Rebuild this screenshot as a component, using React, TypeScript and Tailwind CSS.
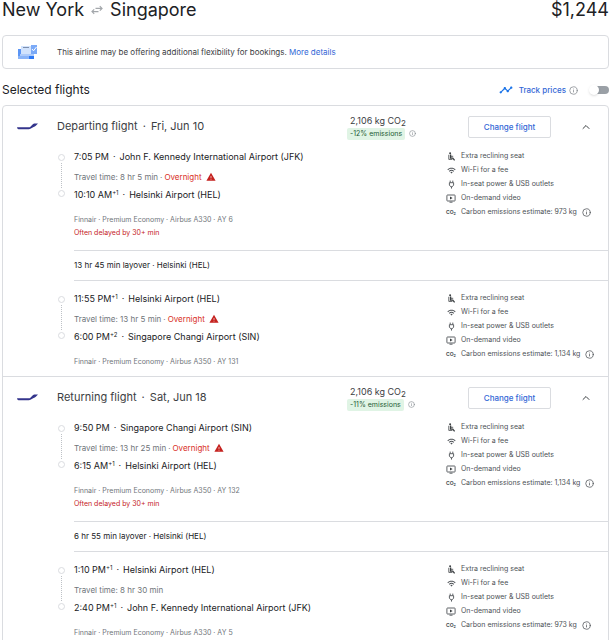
import { ChevronUp, Info } from "lucide-react";
import { MdTimeline, MdWifi, MdWarning } from "react-icons/md";

type Leg = {
  depart: string;
  departDay?: string;
  from: string;
  travel: string;
  overnight?: boolean;
  arrive: string;
  arriveDay?: string;
  to: string;
  plane: string;
  delayed?: boolean;
  carbon: string;
};

type Trip = { title: string; date: string; change: string; layover: string; legs: Leg[] };

const JFK = "John F. Kennedy International Airport (JFK)";
const HEL = "Helsinki Airport (HEL)";
const SIN = "Singapore Changi Airport (SIN)";

const trips: Trip[] = [
  {
    title: "Departing flight", date: "Fri, Jun 10", change: "-12% emissions", layover: "13 hr 45 min layover · Helsinki (HEL)",
    legs: [
      { depart: "7:05 PM", from: JFK, travel: "8 hr 5 min", overnight: true, arrive: "10:10 AM", arriveDay: "+1", to: HEL, plane: "Airbus A330 · AY 6", delayed: true, carbon: "973 kg" },
      { depart: "11:55 PM", departDay: "+1", from: HEL, travel: "13 hr 5 min", overnight: true, arrive: "6:00 PM", arriveDay: "+2", to: SIN, plane: "Airbus A350 · AY 131", carbon: "1,134 kg" },
    ],
  },
  {
    title: "Returning flight", date: "Sat, Jun 18", change: "-11% emissions", layover: "6 hr 55 min layover · Helsinki (HEL)",
    legs: [
      { depart: "9:50 PM", from: SIN, travel: "13 hr 25 min", overnight: true, arrive: "6:15 AM", arriveDay: "+1", to: HEL, plane: "Airbus A350 · AY 132", delayed: true, carbon: "1,134 kg" },
      { depart: "1:10 PM", departDay: "+1", from: HEL, travel: "8 hr 30 min", arrive: "2:40 PM", arriveDay: "+1", to: JFK, plane: "Airbus A330 · AY 5", carbon: "973 kg" },
    ],
  },
];

function SwapIcon() {
  return (
    <svg viewBox="0 0 12 10" className="h-[10px] w-3" fill="none" stroke="#a3a7ab" strokeWidth="1.2">
      <path d="M4.500 3.400H11M8.800 1.200 11 3.400 8.800 5.600M7.500 6.600H1M3.200 4.400 1 6.600l2.200 2.200" />
    </svg>
  );
}

function TicketIcon() {
  return (
    <svg viewBox="0 0 21 16" className="h-4 w-[21px]">
      <path d="M1 5h16v10H1z" fill="#8ab4f8" />
      <path d="M1 5h3v7H1z" fill="#5b95f5" />
      <path d="M4 2h11v9H4z" fill="#d2e3fc" />
      <path d="M6 3h6v1H6z" fill="#7d8fae" />
      <path d="M3 10h14v2H3z" fill="#aecbfa" />
      <path d="M12 12h5v3h-5z" fill="#2f7af5" />
      <path d="M14 1h6v9h-6z" fill="#7baaf7" />
      <path d="M15 5l1.500 1.800L19.500 3" fill="none" stroke="#fff" />
    </svg>
  );
}

function FinnairIcon() {
  return (
    <svg viewBox="0 0 21 8" className="h-2 w-[21px]" fill="#34358c">
      <path d="M0 4.300h11.500c1 0 1.500-.3 2.100-.9l2-2C16.300.7 17 .5 18 .5h3l-2.200 2.300c-.7.7-1.300 1-2.200 1.200l-2.700 1.500c-.7.4-1.300.7-2.300.7H1.500C.8 6.200.2 5.500 0 4.300z" />
    </svg>
  );
}

function SeatIcon() {
  return (
    <svg viewBox="0 0 9 9" className="size-[9px]" fill="none" stroke="#3c4043">
      <circle cx="3.100" cy="1.300" r="1" fill="#3c4043" stroke="none" />
      <path d="M3.600 2.600v3.600h2.200L7.600 8.400" strokeWidth="1.300" />
      <path d="M1.800 2.800v4.600h3.600M4 4.300h2.200" strokeWidth=".8" />
    </svg>
  );
}

function PlugIcon() {
  return (
    <svg viewBox="0 0 9 9" className="size-[9px]" fill="none" stroke="#4d5156" strokeWidth=".9">
      <path d="M3.200 .6v2M5.800 .6v2M2.400 2.700h4.200v2.400L5.200 6.800H3.800L2.400 5.100zM4.500 6.800v1.800" />
    </svg>
  );
}

function VideoIcon() {
  return (
    <svg viewBox="0 0 10 9" className="h-[9px] w-[10px]" fill="none" stroke="#4d5156" strokeWidth=".9">
      <rect x=".9" y="1" width="8.200" height="6" rx=".6" />
      <path d="M3.500 8.200h3" />
      <path d="M4 2.500 6.600 4 4 5.500z" fill="#3c4043" stroke="none" />
    </svg>
  );
}

function Amenities({ carbon }: { carbon: string }) {
  const rows = [
    { icon: <SeatIcon />, text: "Extra reclining seat" },
    { icon: <MdWifi className="size-[9px]" />, text: "Wi-Fi for a fee" },
    { icon: <PlugIcon />, text: "In-seat power & USB outlets" },
    { icon: <VideoIcon />, text: "On-demand video" },
    { icon: <span className="text-[5px] font-bold">CO<sub>2</sub></span>, text: `Carbon emissions estimate: ${carbon}`, info: true },
  ];
  return (
    <ul className="w-[162px] shrink-0 text-[7px] leading-[14px] text-[#4d5156]">
      {rows.map(r => (
        <li key={r.text} className="flex h-[14px] items-center whitespace-nowrap">
          <span className="mr-[5px] flex w-[10px] justify-center">{r.icon}</span>
          {r.text}
          {r.info && <Info className="ml-[5px] size-[9px]" />}
        </li>
      ))}
    </ul>
  );
}

function Stop({ time, day, airport }: { time: string; day?: string; airport: string }) {
  return (
    <p className="flex h-4 items-center text-[9px] text-[#202124]">
      <span>{time}</span>
      {day && <span className="mb-[5px] text-[6px]">{day}</span>}
      <span className="mx-1">·</span>
      <span>{airport}</span>
    </p>
  );
}

function LegDetails({ leg }: { leg: Leg }) {
  return (
    <div className="flex pt-[10px] pb-[11px] pl-[55px] last:pb-2">
      <div className="mt-[5px] flex h-[43px] w-[7px] shrink-0 flex-col items-center">
        <span className="size-[7px] rounded-full border border-[#dadce0]" />
        <span className="my-[2px] flex-1 border-l border-dotted border-[#bdc1c6]" />
        <span className="size-[7px] rounded-full border border-[#dadce0]" />
      </div>
      <div className="ml-[9px] flex-1 whitespace-nowrap">
        <Stop time={leg.depart} day={leg.departDay} airport={leg.from} />
        <p className="mt-1 mb-[2px] flex h-4 items-center gap-[2px] text-[8px] text-[#70757a]">
          Travel time: {leg.travel}
          {leg.overnight && (
            <>
              <span>·</span>
              <span className="text-[#d93025]">Overnight</span>
              <MdWarning className="ml-[2px] size-[10px] text-[#c5221f]" />
            </>
          )}
        </p>
        <Stop time={leg.arrive} day={leg.arriveDay} airport={leg.to} />
        <p className="mt-[10px] text-[7px] leading-[13px] text-[#70757a]">Finnair · Premium Economy · {leg.plane}</p>
        {leg.delayed && <p className="text-[7px] leading-[13px] text-[#c5221f]">Often delayed by 30+ min</p>}
      </div>
      <Amenities carbon={leg.carbon} />
    </div>
  );
}

function TripSection({ trip }: { trip: Trip }) {
  return (
    <section className="border-b border-[#dadce0] last:border-b-0">
      <header className="flex h-[33px] items-center pt-2 pl-[14px] whitespace-nowrap">
        <FinnairIcon />
        <h3 className="ml-[19px] flex-1 text-[11px] text-[#3c4043]">
          {trip.title} <span className="mx-[2px]">·</span> {trip.date}
        </h3>
        <div className="w-[121px]">
          <p className="pl-[3px] text-[9px] leading-[14px] text-[#3c4043]">
            2,106 kg CO<sub className="text-[8px]">2</sub>
          </p>
          <p className="flex items-center gap-1">
            <span className="rounded-xs bg-[#e0f4e5] px-[3px] text-[7px] leading-[12px] text-[#1e5b34]">{trip.change}</span>
            <Info className="size-[7px] text-[#80868b]" />
          </p>
        </div>
        <button type="button" className="h-[22px] w-[83px] rounded-xs border border-[#dadce0] text-[8px] font-medium text-[#3367d6]">
          Change flight
        </button>
        <button type="button" aria-label={`Collapse ${trip.title}`} className="mr-[16px] ml-[29px]">
          <ChevronUp className="size-3 text-[#3c4043]" />
        </button>
      </header>
      <LegDetails leg={trip.legs[0]} />
      <p className="ml-[71px] border-y border-[#dadce0] text-[8px] leading-[29px] text-[#202124]">{trip.layover}</p>
      <LegDetails leg={trip.legs[1]} />
    </section>
  );
}

export default function App() {
  return (
    <main className="bg-white pr-1 pl-[2px] font-[Inter,sans-serif]">
      <div className="flex justify-between text-[18px] leading-5 text-[#202124]">
        <h1 className="flex items-center gap-[7px]">
          New York <SwapIcon /> Singapore
        </h1>
        <span>$1,244</span>
      </div>

      <div className="mt-[15px] flex h-[34px] items-center rounded-sm border border-[#dadce0] pl-[14px] text-[8px] text-[#3c4043]">
        <TicketIcon />
        <p className="ml-[19px]">
          This airline may be offering additional flexibility for bookings.{" "}
          <a href="#details" className="text-[#3367d6]">More details</a>
        </p>
      </div>

      <div className="mt-[13px] flex h-4 items-center">
        <h2 className="flex-1 text-[12px] text-[#202124]">Selected flights</h2>
        <MdTimeline className="mr-[6px] size-[14px] text-[#1a73e8]" />
        <label htmlFor="track" className="text-[8px] font-medium text-[#3367d6]">Track prices</label>
        <Info className="mr-[11px] ml-[3px] size-[9px] text-[#80868b]" />
        <input
          id="track"
          type="checkbox"
          role="switch"
          className="h-2 w-5 appearance-none rounded-full bg-linear-to-r from-white from-30% to-[#9aa0a6] to-30% before:-mt-px before:block before:size-[10px] before:rounded-full before:bg-white before:shadow"
        />
      </div>

      <div className="mt-[7px] rounded-sm border border-[#dadce0]">
        {trips.map(trip => <TripSection key={trip.title} trip={trip} />)}
      </div>
    </main>
  );
}
